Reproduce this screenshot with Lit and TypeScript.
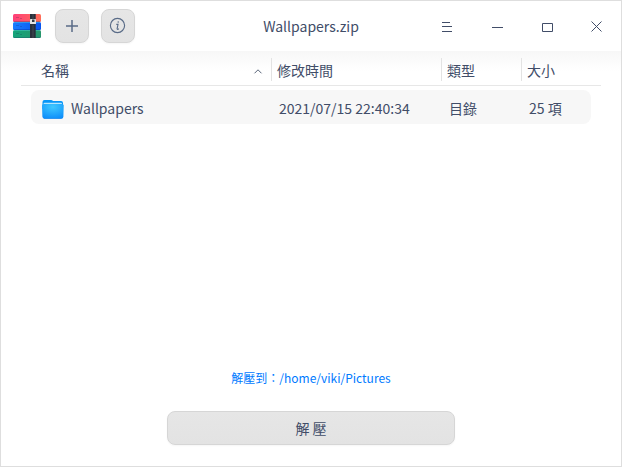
import { LitElement, html, css, svg } from "lit";
import { customElement, property } from "lit/decorators.js";

const logo = svg`
  <svg width="30" height="28" viewBox="0 0 30 28">
    <defs>
      <linearGradient id="r" x2="1" y2="0"><stop offset="0" stop-color="#ff3f79"/><stop offset="1" stop-color="#ff6d58"/></linearGradient>
      <linearGradient id="b" x2="1" y2="0"><stop offset="0" stop-color="#1a7cff"/><stop offset="1" stop-color="#0554f0"/></linearGradient>
      <linearGradient id="g" x2="1" y2="0"><stop offset="0" stop-color="#15a57b"/><stop offset="1" stop-color="#26966c"/></linearGradient>
    </defs>
    <rect x="1" y="2" width="28" height="8" rx="1.5" fill="url(#r)"/>
    <rect x="1" y="10" width="28" height="8" rx="1.5" fill="url(#b)"/>
    <rect x="1" y="18" width="28" height="8" rx="1.5" fill="url(#g)"/>
    <path d="M1.500 9.500h27M1.500 25.500h27" stroke="#173f68" stroke-opacity=".3"/>
    <path d="M1.500 17.500h27" stroke="#0430a0" stroke-opacity=".4"/>
    <path d="M2 10.500h26M2 18.500h26" stroke="#54d8dc" stroke-opacity=".4"/>
    <path d="M4 5.500h3M8 6.500h2M4 13.500h3M8 14.500h2M4 21.500h3M8 22.500h2" stroke="#102a50" stroke-opacity=".22"/>
    <rect x="18" y="2" width="5.700" height="24" fill="#29303b"/>
    <path d="M21 2v5M21 13v13" stroke="#454b55"/>
    <rect x="18" y="7" width="6" height="5" rx=".6" fill="#e4e4e4"/>
    <rect x="20" y="7.500" width="2.500" height="2.500" fill="#343a42"/>
  </svg>`;

const plus = svg`
  <svg width="16" height="16" viewBox="0 0 16 16" fill="none" stroke="#596b87" stroke-width="1.5">
    <path d="M8 2v12M2 8h12"/>
  </svg>`;

const info = svg`
  <svg width="18" height="18" viewBox="0 0 18 18" fill="none" stroke="#596b87">
    <circle cx="8.500" cy="8.500" r="7.100" stroke-width="1.150"/>
    <path d="M7.300 7.400h1.700L8.100 11.800q0 .6.500.6.600 0 1.200-.7" stroke-width="1.100"/>
    <circle cx="9.200" cy="5" r=".75" fill="#596b87" stroke="none"/>
  </svg>`;

const folder = svg`
  <svg width="24" height="22" viewBox="0 0 24 22">
    <defs>
      <radialGradient id="f" cx=".5" cy=".2" r=".85"><stop offset="0" stop-color="#3fc8ff"/><stop offset="1" stop-color="#0b8cfa"/></radialGradient>
    </defs>
    <path d="M1.500 3Q1.500 1 3.500 1H10q1.200 0 2 1h8Q22 2 22 4v6H1.500Z" fill="#0796f8"/>
    <rect x="2.500" y="3.700" width="18.500" height="5" rx="1" fill="#b5e6ff"/>
    <path d="M1 6.500Q1 5 2.500 5h18.500Q22.700 5 22.700 6.500l-.3 11Q22.300 19.700 20.500 19.700H3.500Q1.600 19.700 1.400 17.500Z" fill="url(#f)"/>
    <path d="M3 19.500h17.500" stroke="#0876e0" stroke-opacity=".4"/>
  </svg>`;

const controls = [
  "M2 3.5h8M2 7.500h10M2 12.500h10",
  "M2 8.500h11",
  "M2.500 4.500h10v8h-10z",
  "M1.500 2.500l10 10M11.500 2.500l-10 10",
];

@customElement("archive-row")
class ArchiveRow extends LitElement {
  @property() name = "";
  @property() modified = "";
  @property() kind = "";
  @property() size = "";

  static styles = css`
    :host {
      display: grid;
      grid-template-columns: 246px 170px 80px 1fr;
      align-items: start;
      height: 34px;
      margin: 4px 30px 0;
      padding-left: 2px;
      box-sizing: border-box;
      border-radius: 8px;
      background: #f7f7f7;
    }
    .name { display: flex; align-items: flex-start; }
    svg { display: block; margin: 9px 6px 0 8px; }
    span { white-space: nowrap; line-height: 34px; padding-top: 1px; }
  `;

  render() {
    return html`
      <div class="name">${folder}<span>${this.name}</span></div>
      <span>${this.modified}</span><span>${this.kind}</span><span>${this.size}</span>
    `;
  }
}

@customElement("app-root")
class AppRoot extends LitElement {
  static styles = css`
    :host {
      display: flex;
      flex-direction: column;
      box-sizing: border-box;
      width: 622px;
      height: 467px;
      border: 1px solid #dedede;
      background: #fff;
      color: #414d68;
      font: 14px/20px "Noto Sans CJK TC", sans-serif;
    }
    svg { display: block; }
    header { display: grid; grid-template-columns: 134px 1fr 180px; height: 50px; }
    .tools { display: flex; align-items: flex-start; padding-left: 11px; }
    .tools > svg { margin-top: 11px; margin-right: 1px; flex: none; }
    .tool {
      display: flex; align-items: center; justify-content: center;
      width: 34px; height: 34px; box-sizing: border-box;
      border: 1px solid #d6d6d6; border-radius: 8px;
      background: linear-gradient(#e6e6e6, #e3e3e3);
      box-shadow: 0 1px 2px rgba(0, 0, 0, 0.04);
      margin: 8px 0 0 12px;
      flex: none;
      padding: 0;
    }
    .title { text-align: center; line-height: 51px; padding-left: 46px; }
    .controls { display: grid; grid-template-columns: repeat(4, 50px); padding: 18px 0 0 0; margin-left: -15px; }
    .controls svg { margin-left: 14px; }
    main { flex: 1; display: flex; flex-direction: column; background: linear-gradient(#f7f7f7, #fff 20px); }
    .head {
      display: grid; grid-template-columns: 250px 170px 80px 1fr;
      height: 34px; margin: 0 20px; border-bottom: 1px solid #e7e7e7;
    }
    .cell { display: flex; height: 23px; margin-top: 7px; line-height: 25px; padding-left: 5px; border-left: 1px solid #e3e3e3; }
    .cell.first { border: 0; padding-left: 20px; justify-content: space-between; }
    .sort { margin: 9px 8px 0 0; }
    footer { display: flex; flex-direction: column; align-items: center; margin-top: auto; padding-bottom: 21px; }
    .path { color: #007aff; font-size: 12px; line-height: 18px; }
    .extract {
      width: 288px; height: 34px; box-sizing: border-box; margin-top: 24px; padding: 0 0 1px;
      border: 1px solid #d6d6d6; border-radius: 8px;
      background: linear-gradient(#e6e6e6, #e3e3e3);
      box-shadow: 0 1px 2px rgba(0, 0, 0, 0.04);
      color: inherit; font: inherit;
    }
  `;

  render() {
    return html`
      <header>
        <div class="tools">
          ${logo}
          <button class="tool">${plus}</button>
          <button class="tool">${info}</button>
        </div>
        <div class="title">Wallpapers.zip</div>
        <div class="controls">
          ${controls.map((d) => html`
            <svg width="15" height="15" viewBox="0 0 15 15" fill="none" stroke="#414d68"><path d=${d} /></svg>
          `)}
        </div>
      </header>
      <main>
        <div class="head">
          <div class="cell first">名稱
            <svg class="sort" width="10" height="8" viewBox="0 0 10 8" fill="none" stroke="#596579"><path d="M1.500 6.300 5 2.800 8.500 6.300"/></svg>
          </div>
          <div class="cell">修改時間</div>
          <div class="cell">類型</div>
          <div class="cell">大小</div>
        </div>
        <archive-row name="Wallpapers" modified="2021/07/15 22:40:34" kind="目錄" size="25 項"></archive-row>
        <footer>
          <div class="path">解壓到：/home/viki/Pictures</div>
          <button class="extract">解 壓</button>
        </footer>
      </main>
    `;
  }
}
